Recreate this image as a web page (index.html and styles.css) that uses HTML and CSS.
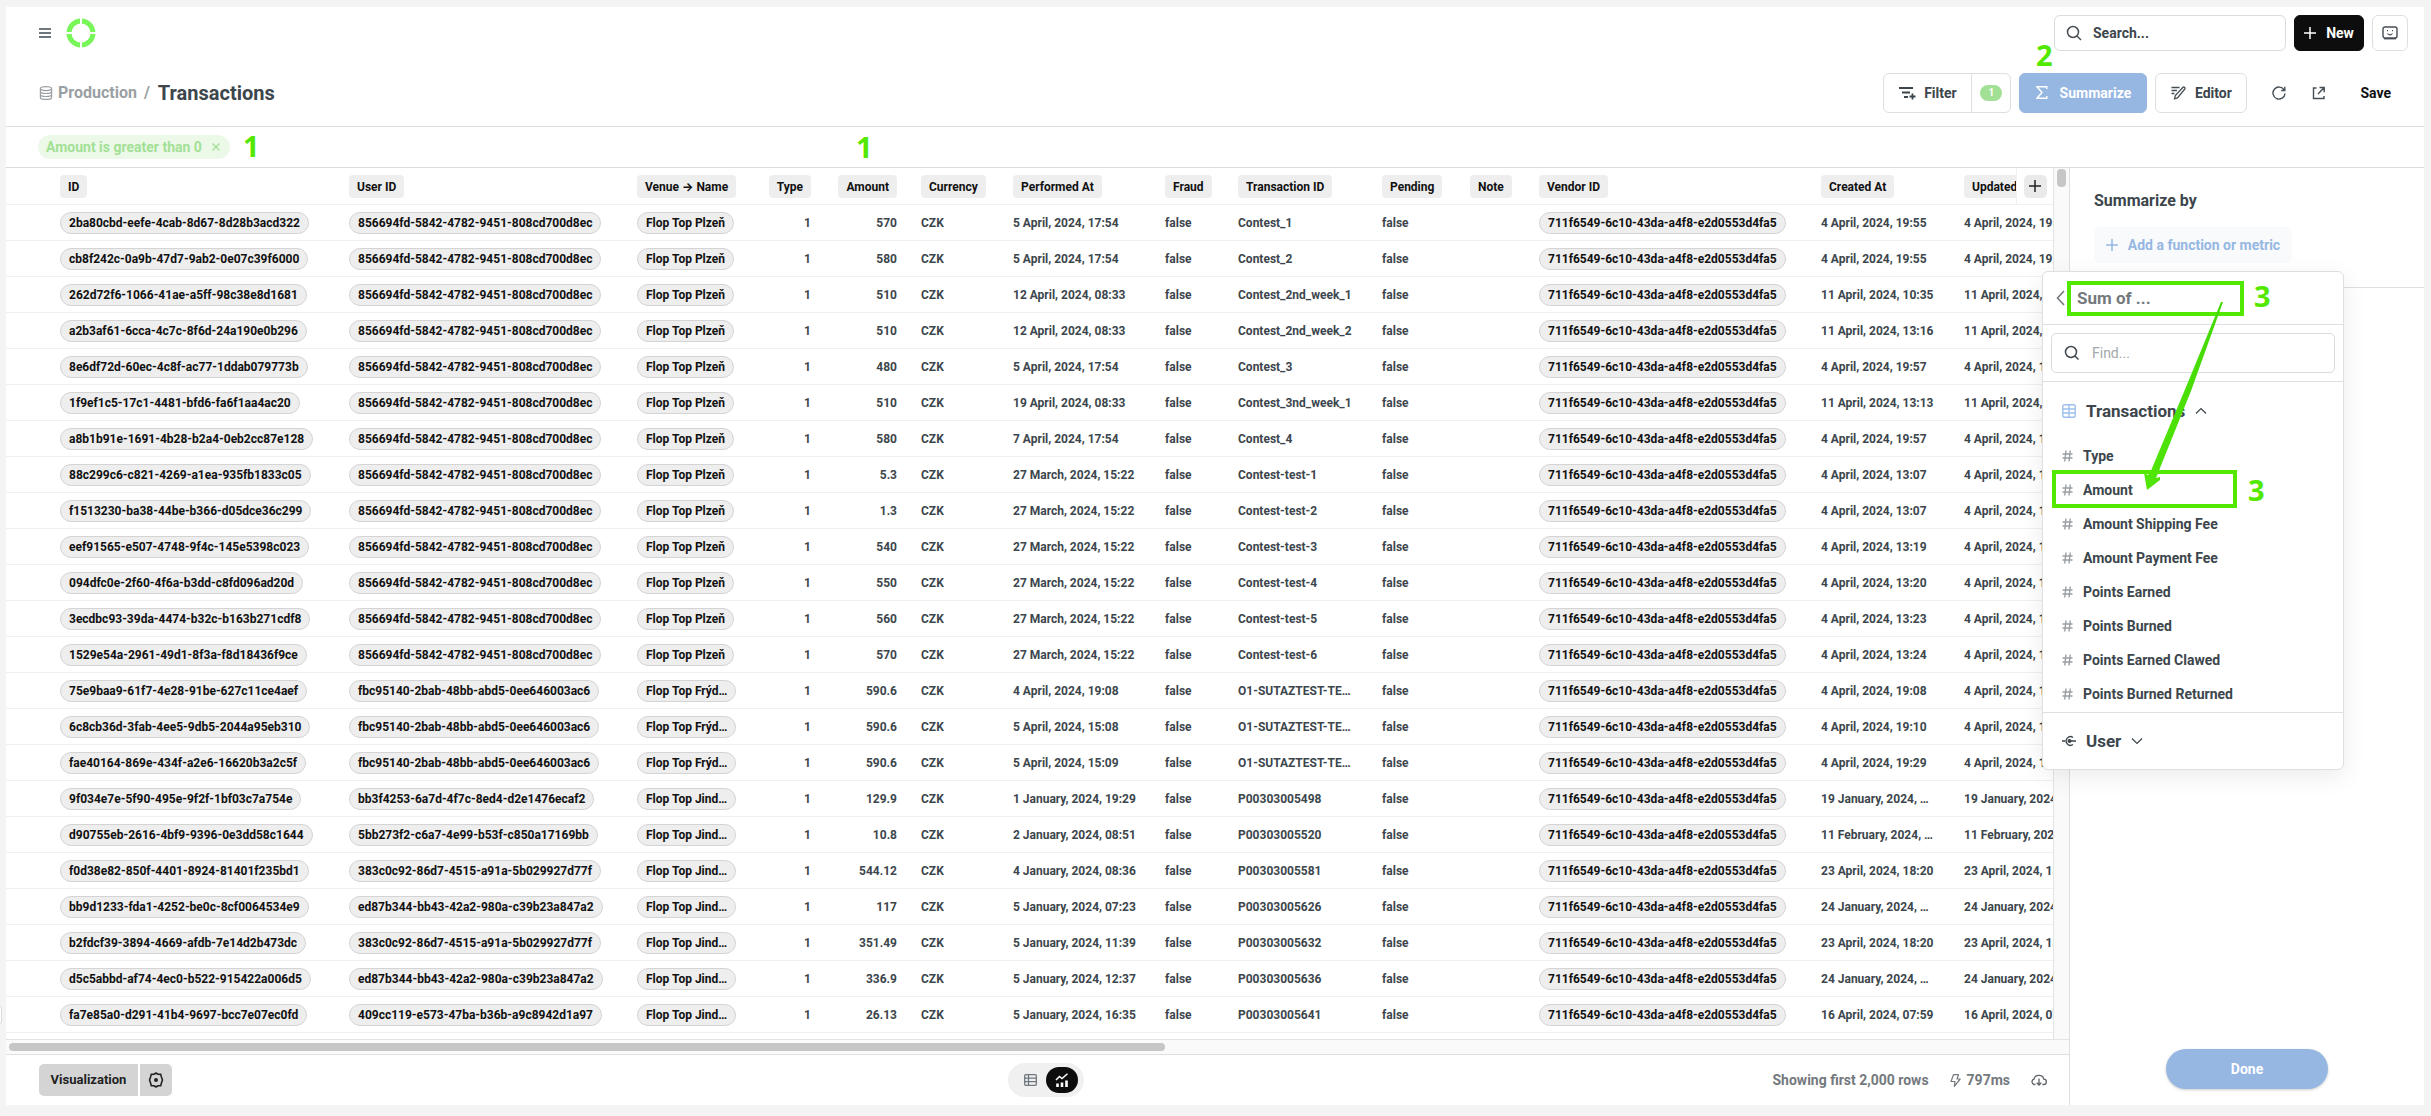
FILE: index.html
```
<!DOCTYPE html>
<html lang="en">
<head>
<meta charset="utf-8">
<title>Transactions</title>
<link rel="stylesheet" href="styles.css">
</head>
<body>
<span class="edge-handle"></span>
<div class="app">
  <header class="topbar">
    <button class="icon-btn" aria-label="Toggle menu">
      <svg width="12" height="10" viewBox="0 0 12 10"><path d="M0 1h12M0 5h12M0 9h12" stroke="#6f777d" stroke-width="1.800"/></svg>
    </button>
    <a class="logo" href="#" aria-label="Home">
      <svg width="30" height="30" viewBox="0 0 30 30"><circle cx="15" cy="15" r="12" fill="none" stroke="#79f75a" stroke-width="5"/><path d="M15 0v30M0 15h30" stroke="#fff" stroke-width="2"/></svg>
    </a>
    <label class="search">
      <svg width="16" height="16" viewBox="0 0 16 16" fill="none" stroke="#454e54" stroke-width="1.5"><circle cx="7" cy="7" r="5.5"/><path d="M11 11l4 4"/></svg>
      <input type="text" placeholder="Search..." aria-label="Search">
    </label>
    <button class="btn btn-new">
      <svg width="12" height="12" viewBox="0 0 12 12"><path d="M6 0v12M0 6h12" stroke="#fff" stroke-width="1.5"/></svg>New
    </button>
    <button class="btn btn-square" aria-label="Help">
      <svg width="16" height="14" viewBox="0 0 16 14" fill="none" stroke="#454e54" stroke-width="1.4"><rect x="1" y="1" width="14" height="11" rx="2"/><path d="M2 12.7h12"/><path d="M5.5 4v1.2M10.500 4v1.200M5.500 7.500c1.500 1.800 3.500 1.800 5 0" stroke-width="1.100"/></svg>
    </button>
  </header>

  <section class="toolbar">
    <nav class="crumbs">
      <svg width="14" height="14" viewBox="0 0 14 14" fill="none" stroke="#9a9fa3" stroke-width="1.200"><ellipse cx="7" cy="2.600" rx="5.600" ry="2"/><path d="M1.400 2.600v8.800c0 1.100 2.500 2 5.600 2s5.600-.9 5.600-2V2.600M1.400 5.500c0 1.100 2.500 2 5.600 2s5.600-.9 5.600-2M1.400 8.500c0 1.100 2.500 2 5.600 2s5.600-.9 5.600-2"/></svg>
      <a href="#">Production</a><span class="slash">/</span>
      <h1>Transactions</h1>
    </nav>
    <div class="filter-group">
      <button class="filter-main">
        <svg width="17" height="14" viewBox="0 0 17 14" fill="none" stroke="#3c464c" stroke-width="1.800"><path d="M0 2h14M3 6.500h8M5 11h4M13.500 7.500v6M10.500 10.500h6"/></svg>Filter
      </button>
      <button class="filter-count" aria-label="Toggle filters"><span>1</span></button>
    </div>
    <button class="btn btn-summarize">
      <svg width="12" height="13" viewBox="0 0 12 13" fill="none" stroke="#fff" stroke-width="1.400"><path d="M10.800 3V.8H1l5 5.700-5 5.700h9.800V10"/></svg>Summarize
    </button>
    <button class="btn btn-editor">
      <svg width="15" height="14" viewBox="0 0 15 14" fill="none" stroke="#454e54" stroke-width="1.300"><path d="M.5 1.500h8M.5 4.500h5.500M.5 7.500h3M3.500 12.800l.8-3.200L11.800 1.500c.6-.6 1.300-.5 1.800 0s.6 1.200 0 1.800L6.500 12z"/></svg>Editor
    </button>
    <div class="tools">
      <button class="icon-btn" aria-label="Refresh">
        <svg width="14" height="14" viewBox="0 0 14 14" fill="none" stroke="#454e54" stroke-width="1.400"><path d="M12.300 4.200A6 6 0 1 0 13 7.500M12.800 .8v3.700H9.200"/></svg>
      </button>
      <button class="icon-btn" aria-label="Share">
        <svg width="14" height="14" viewBox="0 0 14 14" fill="none" stroke="#454e54" stroke-width="1.400"><path d="M4.500 2H1.500v10.500h10.500V10M7.500 1.500h4.700V6.200M12.200 1.500L6 8"/></svg>
      </button>
      <button class="save">Save</button>
    </div>
  </section>

  <section class="filterbar">
    <span class="chip">Amount is greater than 0
      <button aria-label="Remove filter"><svg width="8" height="8" viewBox="0 0 8 8"><path d="M.5 .5l7 7M7.500 .5l-7 7" stroke="#a2e095" stroke-width="1.400"/></svg></button>
    </span>
  </section>

  <main class="main">
    <div class="results">
      <div class="grid-wrap">
        <div class="grid-view">
          <table class="grid">
            <colgroup>
              <col class="c-id"><col class="c-user"><col class="c-venue"><col class="c-type"><col class="c-amount"><col class="c-currency"><col class="c-performed"><col class="c-fraud"><col class="c-txn"><col class="c-pending"><col class="c-note"><col class="c-vendor"><col class="c-created"><col class="c-updated">
            </colgroup>
            <thead>
              <tr>
                <th><span>ID</span></th><th><span>User ID</span></th><th><span>Venue → Name</span></th><th class="num"><span>Type</span></th><th class="num"><span>Amount</span></th><th><span>Currency</span></th><th><span>Performed At</span></th><th><span>Fraud</span></th><th><span>Transaction ID</span></th><th><span>Pending</span></th><th><span>Note</span></th><th><span>Vendor ID</span></th><th><span>Created At</span></th><th><span>Updated At</span></th>
              </tr>
            </thead>
            <tbody id="rows"></tbody>
          </table>
          <div class="add-col">
            <button aria-label="Add column"><svg width="12" height="12" viewBox="0 0 12 12"><path d="M6 0v12M0 6h12" stroke="#222" stroke-width="1.500"/></svg></button>
          </div>
        </div>
        <div class="vtrack"><div class="vthumb"></div></div>
        <div class="htrack"><div class="hthumb"></div></div>
      </div>
      <footer class="footer">
        <div class="viz">
          <button class="viz-main">Visualization</button>
          <button class="viz-gear" aria-label="Settings">
            <svg width="16" height="16" viewBox="0 0 16 16" fill="none" stroke="#222" stroke-width="1.600"><path d="M8 1l2 1.200 2.800.2.600 2.600L14.500 8l-1.100 3-.6 2.600-2.800.2L8 15l-2-1.200-2.800-.2L2.600 11 1.500 8l1.100-3 .6-2.600L6 2.200z" stroke-linejoin="round"/><circle cx="8" cy="8" r="2" fill="#222" stroke="none"/></svg>
          </button>
        </div>
        <div class="toggle">
          <button aria-label="Table view"><svg width="13" height="12" viewBox="0 0 13 12" fill="none" stroke="#6f777d" stroke-width="1.300"><rect x=".7" y=".7" width="11.600" height="10.600" rx="1"/><path d="M.7 4.200h11.600M.7 7.700h11.600M4.500 .7v10.600"/></svg></button>
          <button class="active" aria-label="Chart view"><svg width="14" height="14" viewBox="0 0 14 14" fill="none" stroke="#fff"><path d="M1 7l3.500-3.500 2.500 2L12.500.8" stroke-width="1.500"/><path d="M2.500 14v-3.500M7 14V9.500M11.500 14V7.500" stroke-width="2.600"/></svg></button>
        </div>
        <div class="status">
          <span>Showing first 2,000 rows</span>
          <span class="time"><svg width="11" height="13" viewBox="0 0 11 13" fill="none" stroke="#74797d" stroke-width="1.200"><path d="M3.500.7h5L7 5h3.200L4.300 12.300 5 7.500H1z" stroke-linejoin="round"/></svg>797ms</span>
          <button class="icon-btn" aria-label="Download"><svg width="16" height="12" viewBox="0 0 16 12" fill="none" stroke="#5b6166" stroke-width="1.300"><path d="M4.500 10.500H3.500A2.700 2.700 0 0 1 3 5.200a5 4.600 0 0 1 9.800-.1 2.700 2.700 0 0 1-.3 5.400h-1M8 4.500v6.500M5.700 8.800L8 11l2.300-2.200"/></svg></button>
        </div>
      </footer>
    </div>

    <aside class="side">
      <div class="side-head">
        <h2>Summarize by</h2>
        <button class="add-metric"><svg width="12" height="12" viewBox="0 0 12 12"><path d="M6 0v12M0 6h12" stroke="#96b7e2" stroke-width="1.500"/></svg>Add a function or metric</button>
      </div>
      <button class="done">Done</button>

      <div class="popover">
        <button class="pop-back">
          <svg width="9" height="16" viewBox="0 0 9 16" fill="none" stroke="#74797d" stroke-width="1.600"><path d="M8 1L1.500 8 8 15"/></svg>Sum of ...
        </button>
        <div class="pop-find">
          <label>
            <svg width="16" height="16" viewBox="0 0 16 16" fill="none" stroke="#3c464c" stroke-width="1.500"><circle cx="7" cy="7" r="5.500"/><path d="M11 11l3.500 3.500"/></svg>
            <input type="text" placeholder="Find..." aria-label="Find">
          </label>
        </div>
        <button class="pop-title">
          <svg width="14" height="14" viewBox="0 0 14 14" fill="none" stroke="#9fc0ea" stroke-width="1.400"><rect x=".8" y=".8" width="12.400" height="12.400" rx="1.500"/><path d="M.8 5h12.400M.8 9h12.400M7 .8v12.400"/></svg>Transactions
          <svg class="chev" width="12" height="8" viewBox="0 0 12 8" fill="none" stroke="#3c464c" stroke-width="1.200"><path d="M1 6.500l5-5 5 5"/></svg>
        </button>
        <ul class="pop-list" id="fields"></ul>
        <button class="pop-title pop-user">
          <svg width="14" height="12" viewBox="0 0 14 12" fill="none" stroke="#3c464c" stroke-width="1.400"><path d="M11 2.500A4.300 4.300 0 1 0 11 9.500M0 6h3M8 6h6"/><circle cx="7.500" cy="6" r="2" fill="#3c464c" stroke="none"/></svg>User
          <svg class="chev" width="12" height="8" viewBox="0 0 12 8" fill="none" stroke="#3c464c" stroke-width="1.200"><path d="M1 1.500l5 5 5-5"/></svg>
        </button>
        <span class="mark-box box-sum"></span>
        <span class="mark-box box-amount"></span>
        <span class="mark mark-3a">3</span>
        <span class="mark mark-3b">3</span>
        <svg class="arrow" width="90" height="196" viewBox="0 0 90 196">
          <defs><linearGradient id="ag" x1="0" y1="0" x2="1" y2="0.400"><stop offset="0" stop-color="#5cf010"/><stop offset="1" stop-color="#3fd400"/></linearGradient></defs>
          <path d="M85 6L50 91L14 177L12 179L8 177L11 194L24 184V181L20 182L55 95L87 6Z" fill="url(#ag)"/>
        </svg>
      </div>
    </aside>
  </main>
  <span class="mark mark-1a">1</span>
  <span class="mark mark-1b">1</span>
  <span class="mark mark-2">2</span>
</div>
<script src="data.js"></script>
</body>
</html>
```
FILE: styles.css
```
* { box-sizing: border-box; }
body {
  margin: 0;
  background: #f4f4f4;
  color: #3c464c;
  font: 700 14px/20px Roboto, Inter, "Liberation Sans", sans-serif;
}
button, input {
  font: inherit;
  color: inherit;
  margin: 0;
  padding: 0;
  border: 0;
  background: none;
}
svg { flex: none; display: block; }
a { color: inherit; text-decoration: none; }
h1, h2, ul { margin: 0; padding: 0; }

.app {
  position: relative;
  display: flex;
  flex-direction: column;
  min-height: calc(100vh - 18px);
  margin: 7px 7px 11px 6px;
  background: #fff;
}
.edge-handle {
  position: absolute;
  left: -8px;
  top: 1004px;
  width: 10px;
  height: 22px;
  background: #fff;
  border: 1px solid #d8dadb;
  border-radius: 6px;
}

.topbar { display: flex; align-items: center; height: 52px; padding: 0 16px 0 33px; }
.topbar .btn { margin-left: 8px; }
.icon-btn { display: grid; place-items: center; }
.logo { margin: 0 auto 0 15px; }
.search {
  display: flex;
  align-items: center;
  gap: 11px;
  width: 232px;
  height: 36px;
  padding: 0 11px;
  border: 1px solid #d9dcdd;
  border-radius: 6px;
}
.search input { flex: 1; min-width: 0; outline: 0; }
.search input::placeholder { color: #3c464c; opacity: 1; }
.btn {
  display: flex;
  align-items: center;
  justify-content: center;
  gap: 10px;
  height: 40px;
  border: 1px solid #dddfe0;
  border-radius: 6px;
}
.btn-new { width: 70px; height: 36px; background: #0d0d0d; border-color: #0d0d0d; color: #fff; }
.btn-square { width: 36px; height: 36px; }

.toolbar {
  display: flex;
  align-items: center;
  gap: 8px;
  height: 68px;
  padding: 0 33px 0 33px;
  border-bottom: 1px solid #dddfe0;
}
.crumbs { display: flex; align-items: center; margin-right: auto; color: #9a9fa3; font-size: 16px; }
.crumbs a { margin-left: 5px; }
.slash { margin: 0 8px 0 7px; }
.crumbs h1 { font-size: 20px; line-height: 24px; color: #3c464c; }
.filter-group { display: flex; width: 128px; height: 40px; border: 1px solid #dddfe0; border-radius: 6px; }
.filter-main { display: flex; align-items: center; justify-content: center; gap: 8px; flex: 1; }
.filter-count { display: grid; place-items: center; width: 39px; border-left: 1px solid #dddfe0; }
.filter-count span {
  width: 22px;
  height: 16px;
  border-radius: 8px;
  background: #a2e095;
  color: #fff;
  font-size: 10px;
  line-height: 16px;
}
.btn-summarize { width: 128px; background: #96b7e2; border-color: #96b7e2; color: #fff; gap: 12px; }
.btn-editor { width: 92px; gap: 9px; }
.tools { display: flex; align-items: center; gap: 26px; padding-left: 17px; }
.save { color: #111; margin-left: 8px; }

.filterbar { display: flex; align-items: center; height: 41px; padding-left: 32px; border-bottom: 1px solid #d9dcdd; }
.chip {
  display: flex;
  align-items: center;
  justify-content: space-between;
  width: 192px;
  height: 24px;
  padding: 0 10px 0 8px;
  border-radius: 12px;
  background: #ecf9e9;
  color: #a2e095;
}

.main { display: flex; flex: 1; }
.results { display: flex; flex-direction: column; flex: 1; min-width: 0; }
.grid-wrap { display: grid; grid-template: 1fr 16px / 1fr 15px; flex: 1; }
.grid-view { position: relative; overflow: hidden; min-width: 0; border-right: 1px solid #e2e4e5; }
.grid { width: 2100px; table-layout: fixed; border-spacing: 0; font-size: 12px; line-height: 20px; }
.grid th, .grid td {
  height: 36px;
  padding: 0 12px;
  border-bottom: 1px solid #f0f0f0;
  text-align: left;
  white-space: nowrap;
  overflow: hidden;
}
.grid th { height: 37px; color: #111; }
.grid .num { text-align: right; }
.grid th:first-child, .grid td:first-child { padding-left: 54px; }
.grid th span { display: inline-block; height: 23px; padding: 0 8px; line-height: 24px; border-radius: 4px; background: #eee; vertical-align: middle; }
.grid .pill {
  display: inline-block;
  height: 22px;
  padding: 0 8px;
  line-height: 21px;
  border: 1px solid #d4d4d4;
  border-radius: 11px;
  background: #eee;
  color: #111;
  vertical-align: middle;
}
.c-id { width: 331px; }
.c-user { width: 288px; }
.c-venue { width: 129px; }
.c-type { width: 69px; }
.c-amount { width: 86px; }
.c-currency { width: 92px; }
.c-performed { width: 152px; }
.c-fraud { width: 73px; }
.c-txn { width: 144px; }
.c-pending { width: 88px; }
.c-note { width: 69px; }
.c-vendor { width: 282px; }
.c-created { width: 143px; }
.add-col {
  position: absolute;
  top: 0;
  right: 0;
  display: grid;
  place-items: center;
  width: 37px;
  height: 37px;
  background: #fff;
  border-left: 1px solid #f0f0f0;
  border-bottom: 1px solid #f0f0f0;
}
.add-col button { display: grid; place-items: center; width: 23px; height: 23px; border-radius: 5px; background: #eaeaea; }
.vtrack { padding: 1px 3px; background: #fafafa; }
.vthumb { height: 18px; border-radius: 4px; background: #c6c6c6; }
.htrack { grid-column: 1 / -1; padding: 3px; background: #fafafa; border-top: 1px solid #e2e4e5; border-bottom: 1px solid #dddfe0; }
.hthumb { width: 56.2%; height: 8px; border-radius: 4px; background: #c6c6c6; }

.footer { display: grid; grid-template-columns: 1fr auto 1fr; align-items: center; height: 50px; padding: 0 22px 0 33px; }
.viz { display: flex; gap: 2px; color: #222; font-size: 13px; }
.viz button { display: grid; place-items: center; height: 32px; background: #d4d4d4; }
.viz .viz-main { width: 99px; border-radius: 5px 0 0 5px; }
.viz .viz-gear { width: 32px; border-radius: 0 5px 5px 0; }
.toggle { display: flex; align-items: center; width: 76px; height: 34px; margin-left: 6px; padding: 0 6px; border-radius: 17px; background: #f0f0f0; }
.toggle button { display: grid; place-items: center; width: 32px; height: 26px; border-radius: 13px; }
.toggle .active { background: #0d0d0d; }
.status { display: flex; align-items: center; justify-content: flex-end; gap: 21px; color: #74797d; }
.time { display: flex; align-items: center; gap: 6px; }

.side {
  position: relative;
  display: flex;
  flex-direction: column;
  justify-content: space-between;
  width: 355px;
  border-left: 1px solid #dddfe0;
}
.side-head { height: 120px; padding: 21px 24px 0; border-bottom: 1px solid #dddfe0; }
.side-head h2 { font-size: 16px; line-height: 24px; }
.add-metric {
  display: flex;
  align-items: center;
  justify-content: center;
  gap: 10px;
  width: 198px;
  height: 36px;
  margin-top: 14px;
  border-radius: 6px;
  background: #f9fafc;
  color: #96b7e2;
}
.done {
  align-self: center;
  width: 162px;
  height: 40px;
  margin-bottom: 16px;
  border-radius: 20px;
  background: #96b7e2;
  color: #fff;
  box-shadow: 0 1px 3px #0003;
}

.popover {
  position: absolute;
  top: 103px;
  left: -28px;
  width: 302px;
  background: #fff;
  border: 1px solid #dddfe0;
  border-radius: 6px;
  box-shadow: 0 6px 24px #00000014;
}
.pop-back {
  display: flex;
  align-items: center;
  gap: 12px;
  width: 100%;
  height: 53px;
  padding-left: 13px;
  border-bottom: 1px solid #dddfe0;
  color: #74797d;
  font-size: 17px;
}
.pop-find { padding: 8px; border-bottom: 1px solid #dddfe0; }
.pop-find label { display: flex; align-items: center; gap: 12px; height: 40px; padding: 0 12px; border: 1px solid #d9dcdd; border-radius: 5px; }
.pop-find input { flex: 1; min-width: 0; font-weight: 400; outline: 0; }
.pop-find input::placeholder { color: #a4a8ab; opacity: 1; }
.pop-title { display: flex; align-items: center; gap: 10px; width: 100%; height: 57px; padding-left: 19px; font-size: 17px; }
.pop-list { padding-bottom: 1px; list-style: none; }
.pop-list button { display: flex; align-items: center; gap: 10px; width: 100%; height: 34px; padding-left: 19px; }
.pop-user { border-top: 1px solid #dddfe0; }

.mark, .mark-box, .arrow { position: absolute; }
.mark { color: #53e800; font: 700 29px/30px "Open Sans", "Noto Sans", sans-serif; }
.mark-box { border: 4px solid #53e800; }
.mark-1a { left: 237px; top: 124px; }
.mark-1b { left: 850px; top: 125px; }
.mark-2 { left: 2030px; top: 33px; }
.mark-3a { left: 211px; top: 9px; }
.mark-3b { left: 205px; top: 203px; }
.box-sum { left: 24px; top: 9px; width: 177px; height: 35px; }
.box-amount { left: 9px; top: 198px; width: 185px; height: 38px; }
.arrow { left: 93px; top: 24px; }
```
FILE: data.js
```
const U1 = "856694fd-5842-4782-9451-808cd700d8ec";
const U2 = "fbc95140-2bab-48bb-abd5-0ee646003ac6";
const U3 = "383c0c92-86d7-4515-a91a-5b029927d77f";
const U4 = "ed87b344-bb43-42a2-980a-c39b23a847a2";
const VENDOR = "711f6549-6c10-43da-a4f8-e2d0553d4fa5";
const PLZEN = "Flop Top Plzeň";
const FRYD = "Flop Top Frýd…";
const JIND = "Flop Top Jind…";

// id, user, venue, amount, performed at, transaction id, created at, updated at (defaults to created at)
const data = [
  ["2ba80cbd-eefe-4cab-8d67-8d28b3acd322", U1, PLZEN, "570", "5 April, 2024, 17:54", "Contest_1", "4 April, 2024, 19:55"],
  ["cb8f242c-0a9b-47d7-9ab2-0e07c39f6000", U1, PLZEN, "580", "5 April, 2024, 17:54", "Contest_2", "4 April, 2024, 19:55"],
  ["262d72f6-1066-41ae-a5ff-98c38e8d1681", U1, PLZEN, "510", "12 April, 2024, 08:33", "Contest_2nd_week_1", "11 April, 2024, 10:35"],
  ["a2b3af61-6cca-4c7c-8f6d-24a190e0b296", U1, PLZEN, "510", "12 April, 2024, 08:33", "Contest_2nd_week_2", "11 April, 2024, 13:16"],
  ["8e6df72d-60ec-4c8f-ac77-1ddab079773b", U1, PLZEN, "480", "5 April, 2024, 17:54", "Contest_3", "4 April, 2024, 19:57"],
  ["1f9ef1c5-17c1-4481-bfd6-fa6f1aa4ac20", U1, PLZEN, "510", "19 April, 2024, 08:33", "Contest_3nd_week_1", "11 April, 2024, 13:13"],
  ["a8b1b91e-1691-4b28-b2a4-0eb2cc87e128", U1, PLZEN, "580", "7 April, 2024, 17:54", "Contest_4", "4 April, 2024, 19:57"],
  ["88c299c6-c821-4269-a1ea-935fb1833c05", U1, PLZEN, "5.3", "27 March, 2024, 15:22", "Contest-test-1", "4 April, 2024, 13:07"],
  ["f1513230-ba38-44be-b366-d05dce36c299", U1, PLZEN, "1.3", "27 March, 2024, 15:22", "Contest-test-2", "4 April, 2024, 13:07"],
  ["eef91565-e507-4748-9f4c-145e5398c023", U1, PLZEN, "540", "27 March, 2024, 15:22", "Contest-test-3", "4 April, 2024, 13:19"],
  ["094dfc0e-2f60-4f6a-b3dd-c8fd096ad20d", U1, PLZEN, "550", "27 March, 2024, 15:22", "Contest-test-4", "4 April, 2024, 13:20"],
  ["3ecdbc93-39da-4474-b32c-b163b271cdf8", U1, PLZEN, "560", "27 March, 2024, 15:22", "Contest-test-5", "4 April, 2024, 13:23"],
  ["1529e54a-2961-49d1-8f3a-f8d18436f9ce", U1, PLZEN, "570", "27 March, 2024, 15:22", "Contest-test-6", "4 April, 2024, 13:24"],
  ["75e9baa9-61f7-4e28-91be-627c11ce4aef", U2, FRYD, "590.6", "4 April, 2024, 19:08", "O1-SUTAZTEST-TE…", "4 April, 2024, 19:08"],
  ["6c8cb36d-3fab-4ee5-9db5-2044a95eb310", U2, FRYD, "590.6", "5 April, 2024, 15:08", "O1-SUTAZTEST-TE…", "4 April, 2024, 19:10"],
  ["fae40164-869e-434f-a2e6-16620b3a2c5f", U2, FRYD, "590.6", "5 April, 2024, 15:09", "O1-SUTAZTEST-TE…", "4 April, 2024, 19:29"],
  ["9f034e7e-5f90-495e-9f2f-1bf03c7a754e", "bb3f4253-6a7d-4f7c-8ed4-d2e1476ecaf2", JIND, "129.9", "1 January, 2024, 19:29", "P00303005498", "19 January, 2024, …", "19 January, 2024"],
  ["d90755eb-2616-4bf9-9396-0e3dd58c1644", "5bb273f2-c6a7-4e99-b53f-c850a17169bb", JIND, "10.8", "2 January, 2024, 08:51", "P00303005520", "11 February, 2024, …", "11 February, 2024"],
  ["f0d38e82-850f-4401-8924-81401f235bd1", U3, JIND, "544.12", "4 January, 2024, 08:36", "P00303005581", "23 April, 2024, 18:20"],
  ["bb9d1233-fda1-4252-be0c-8cf0064534e9", U4, JIND, "117", "5 January, 2024, 07:23", "P00303005626", "24 January, 2024, …", "24 January, 2024"],
  ["b2fdcf39-3894-4669-afdb-7e14d2b473dc", U3, JIND, "351.49", "5 January, 2024, 11:39", "P00303005632", "23 April, 2024, 18:20"],
  ["d5c5abbd-af74-4ec0-b522-915422a006d5", U4, JIND, "336.9", "5 January, 2024, 12:37", "P00303005636", "24 January, 2024, …", "24 January, 2024"],
  ["fa7e85a0-d291-41b4-9697-bcc7e07ec0fd", "409cc119-e573-47ba-b36b-a9c8942d1a97", JIND, "26.13", "5 January, 2024, 16:35", "P00303005641", "16 April, 2024, 07:59"]
];

const pill = (text) => `<td><span class="pill">${text}</span></td>`;
const cell = (text) => `<td>${text}</td>`;
const num = (text) => `<td class="num">${text}</td>`;

document.getElementById("rows").innerHTML = data.map(
  ([id, user, venue, amount, performed, txn, created, updated = created]) =>
    "<tr>" + pill(id) + pill(user) + pill(venue) + num("1") + num(amount) + cell("CZK") +
    cell(performed) + cell("false") + cell(txn) + cell("false") + cell("") +
    pill(VENDOR) + cell(created) + cell(updated) + "</tr>"
).join("");

const hash = '<svg width="11" height="12" viewBox="0 0 11 12" fill="none" stroke="#9a9fa3" stroke-width="1.4"><path d="M4 .5L2.700 11.500M8.300 .5L7 11.500M.5 4h10M.5 8h10"/></svg>';
const fields = ["Type", "Amount", "Amount Shipping Fee", "Amount Payment Fee", "Points Earned",
  "Points Burned", "Points Earned Clawed", "Points Burned Returned"];
document.getElementById("fields").innerHTML = fields.map((f) => `<li><button>${hash}${f}</button></li>`).join("");
```
